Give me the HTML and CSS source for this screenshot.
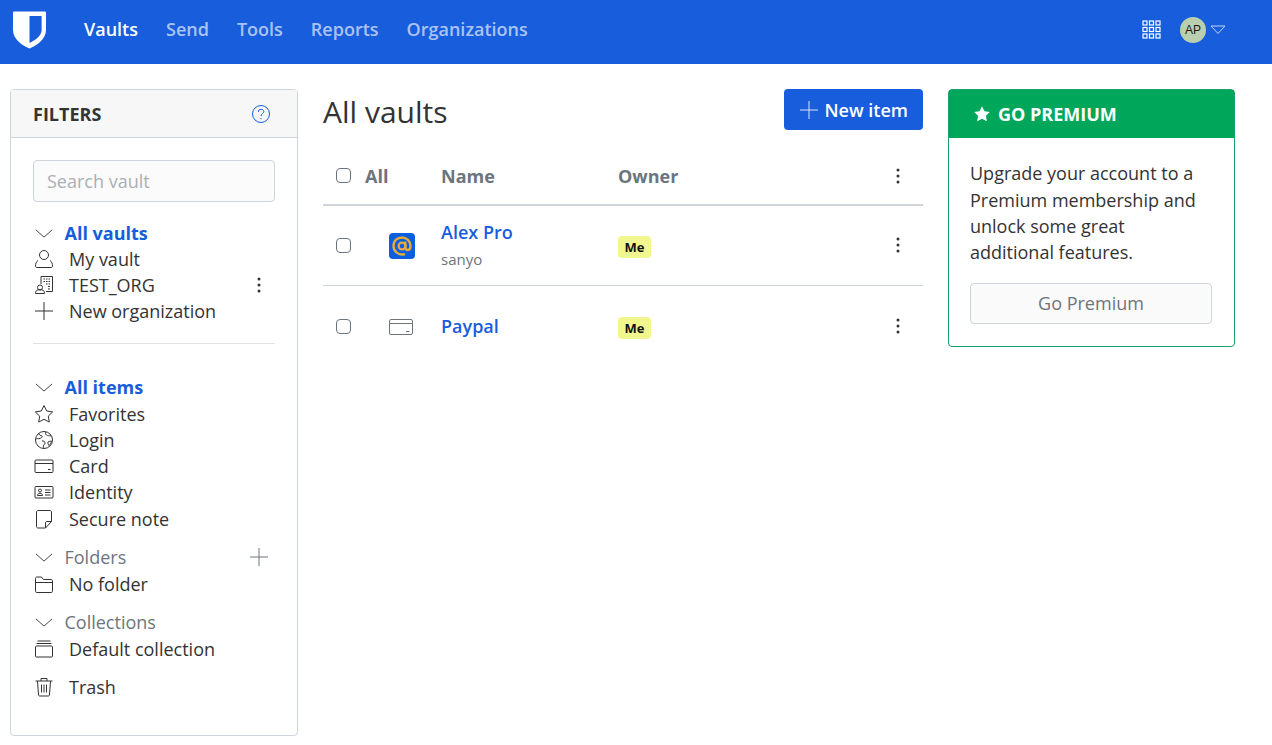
FILE: index.html

```html
<!DOCTYPE html>
<html>
<head>
<meta charset="utf-8">
<title>Vaults</title>
<link rel="stylesheet" href="styles.css">
</head>
<body>
    <nav class="topnav">
        <svg class="logo" viewBox="0 0 34 38"><path fill="#fff" fill-rule="evenodd" d="M1 0h32a1 1 0 0 1 1 1v18c0 10-10 16-17 19C10 35 0 29 0 19V1a1 1 0 0 1 1-1zM17 4.500v28c5-2.700 12.500-7 12.500-13.500V4.500z"/></svg>
        <a class="active" href="#">Vaults</a>
        <a href="#">Send</a>
        <a href="#">Tools</a>
        <a href="#">Reports</a>
        <a href="#">Organizations</a>
        <div class="nav-right">
            <svg class="apps" viewBox="0 0 19 19" fill="none" stroke="#fff" stroke-width="1.200">
                <rect x="1" y="1" width="4" height="4"/><rect x="7.500" y="1" width="4" height="4"/><rect x="14" y="1" width="4" height="4"/>
                <rect x="1" y="7.500" width="4" height="4"/><rect x="7.500" y="7.500" width="4" height="4"/><rect x="14" y="7.500" width="4" height="4"/>
                <rect x="1" y="14" width="4" height="4"/><rect x="7.500" y="14" width="4" height="4"/><rect x="14" y="14" width="4" height="4"/>
            </svg>
            <span class="avatar">AP</span>
            <svg class="caret" viewBox="0 0 16 10" fill="none" stroke="#c5d6f5" stroke-width="1"><path d="M1 1h14L8 8.500z"/></svg>
        </div>
    </nav>

    <div class="page">
        <aside class="filters">
            <div class="filters-head">
                <span>FILTERS</span>
                <svg class="help" viewBox="0 0 20 20" fill="none" stroke="#175ddc" stroke-width="1"><circle cx="10" cy="10" r="8.500"/><path d="M7.300 8c0-1.700 1.200-2.700 2.800-2.700s2.700 1 2.700 2.300c0 2-2.800 2.200-2.800 4.400"/><path d="M10 14v1.200"/></svg>
            </div>
            <div class="filters-body">
                <input class="search" type="text" placeholder="Search vault">

                <div class="row head first">
                    <svg class="chev" viewBox="0 0 20 10"><path d="M1 1l9 8 9-8"/></svg>
                    <a class="head-link" href="#">All vaults</a>
                </div>
                <div class="row">
                    <svg class="ico" viewBox="0 0 20 20"><circle cx="10" cy="6" r="4.500"/><path d="M4 11.500C2 13 1.500 15 1.500 17c0 1 .5 1.500 1.500 1.500h14c1 0 1.500-.5 1.500-1.500 0-2-.5-4-2.500-5.500"/></svg>
                    <span>My vault</span>
                </div>
                <div class="row">
                    <svg class="ico" viewBox="0 0 20 20"><path d="M7 9V1.500h11.500v15H12"/><path d="M9.500 4h1.500M12 4h1.500M14.500 4H16M9.500 6.500h1.500M12 6.500h1.500M14.500 6.500H16M12 9h1.500M14.500 9H16M14 11.500h2M14 14h2"/><circle cx="6" cy="12.500" r="2.500"/><path d="M1.500 18.500c0-2 1-3.500 2.500-3.700h4c1.500.2 2.500 1.700 2.500 3.700z"/></svg>
                    <span>TEST_ORG</span>
                    <svg class="dots" viewBox="0 0 4 16"><circle cx="2" cy="2" r="1.500"/><circle cx="2" cy="8" r="1.500"/><circle cx="2" cy="14" r="1.500"/></svg>
                </div>
                <div class="row">
                    <svg class="ico" viewBox="0 0 20 20"><path d="M10 1v18M1 10h18"/></svg>
                    <span>New organization</span>
                </div>
                <hr class="divider">

                <div class="row head spaced">
                    <svg class="chev" viewBox="0 0 20 10"><path d="M1 1l9 8 9-8"/></svg>
                    <a class="head-link" href="#">All items</a>
                </div>
                <div class="row">
                    <svg class="ico" viewBox="0 0 20 20"><path d="M10 1.500l2.700 5.500 6 .9-4.400 4.200 1 6L10 15.300l-5.300 2.800 1-6L1.300 7.900l6-.9z"/></svg>
                    <span>Favorites</span>
                </div>
                <div class="row">
                    <svg class="ico" viewBox="0 0 20 20"><circle cx="10" cy="10" r="8.500"/><path d="M5 3.500c0 2 2 2 3 2.500s-.5 2-2 2.500-3.500-.5-4.500 1M12 2c-1 1.500 0 3 1.500 3.500s2 0 4 .5M8 11c1.500-.5 3 .5 3 2s-1.500 1.500-1.500 3 0 1.500.5 2.500M14 12c1-1 2.500-.5 3.500-1-.5 2-1 3-2.500 4.500-.5-1-1.500-2-1-3.500z"/></svg>
                    <span>Login</span>
                </div>
                <div class="row">
                    <svg class="ico" viewBox="0 0 20 20"><rect x="1" y="4" width="18" height="12.500" rx="1"/><path d="M1 7.500h18M14 13.500h2.500"/></svg>
                    <span>Card</span>
                </div>
                <div class="row">
                    <svg class="ico" viewBox="0 0 20 20"><rect x="1" y="4.500" width="18" height="11.500" rx="1"/><circle cx="6" cy="8.500" r="1.500"/><path d="M3.500 13.500c0-1.500 1-2.200 2.500-2.200s2.500.7 2.500 2.200zM11 8h5.500M11 10.500h5.500M11 13h5.500"/></svg>
                    <span>Identity</span>
                </div>
                <div class="row note-row">
                    <svg class="ico" viewBox="0 0 20 20"><path d="M2.500 3c0-1 .5-1.500 1.500-1.500h12c1 0 1.500.5 1.500 1.500v9.500l-6 6.500H4c-1 0-1.500-.5-1.500-1.500z"/><path d="M17.500 12.500h-4.500c-1 0-1.500.5-1.500 1.500v5"/></svg>
                    <span>Secure note</span>
                </div>

                <div class="row head muted spaced gap-folders">
                    <svg class="chev" viewBox="0 0 20 10"><path d="M1 1l9 8 9-8"/></svg>
                    <span class="head-text">Folders</span>
                    <svg class="add" viewBox="0 0 20 20"><path d="M10 1v18M1 10h18"/></svg>
                </div>
                <div class="row">
                    <svg class="ico" viewBox="0 0 20 20"><path d="M1.500 17V4.500c0-1 .5-1.500 1.500-1.500h4.500l2 2.500H17c1 0 1.500.5 1.500 1.500v10c0 1-.5 1.500-1.500 1.500H3c-1 0-1.500-.5-1.500-1.500zM1.500 8.500h17"/></svg>
                    <span>No folder</span>
                </div>

                <div class="row head muted spaced gap-collections">
                    <svg class="chev" viewBox="0 0 20 10"><path d="M1 1l9 8 9-8"/></svg>
                    <span class="head-text">Collections</span>
                </div>
                <div class="row">
                    <svg class="ico" viewBox="0 0 20 20"><rect x="1.500" y="7" width="17" height="11" rx="1"/><path d="M2.500 4.500h15M3.500 2h13"/></svg>
                    <span>Default collection</span>
                </div>

                <div class="row gap-trash">
                    <svg class="ico" viewBox="0 0 20 20"><path d="M1.500 4h17M7 4V1.500h6V4M3.500 4l1 14c0 .5.500 1 1 1h9c.5 0 1-.5 1-1l1-14M7.500 7.500v8M10 7.500v8M12.500 7.500v8"/></svg>
                    <span>Trash</span>
                </div>
            </div>
        </aside>

        <main class="vault">
            <div class="vault-head">
                <h1>All vaults</h1>
                <button class="btn-new">
                    <svg viewBox="0 0 20 20"><path d="M10 1v18M1 10h18"/></svg>
                    New item
                </button>
            </div>
            <div class="vrow vrow-head">
                <span class="c-check"><input type="checkbox"></span>
                <span class="c-all">All</span>
                <span class="c-name">Name</span>
                <span class="c-owner">Owner</span>
                <span class="c-menu"><svg class="dots" viewBox="0 0 4 16"><circle cx="2" cy="2" r="1.500"/><circle cx="2" cy="8" r="1.500"/><circle cx="2" cy="14" r="1.500"/></svg></span>
            </div>
            <div class="vrow vrow-first">
                <span class="c-check"><input type="checkbox"></span>
                <span class="c-all c-icon">
                    <svg class="site" viewBox="0 0 26 26"><rect width="26" height="26" rx="4" fill="#0a5fe0"/><path fill="none" stroke="#e5a93d" stroke-width="2.400" stroke-linecap="round" d="M15 21.300C9.500 22.300 4.500 18.500 4.500 13S8.500 4.500 13 4.500 21.500 8 21.500 13c0 2.300-1 4-2.700 4S16.300 15.500 16.300 14V9.500"/><circle cx="13" cy="13" r="3.400" fill="none" stroke="#e5a93d" stroke-width="2.200"/></svg>
                </span>
                <span class="c-name">
                    <a href="#">Alex Pro</a>
                    <small>sanyo</small>
                </span>
                <span class="c-owner"><span class="badge">Me</span></span>
                <span class="c-menu"><svg class="dots" viewBox="0 0 4 16"><circle cx="2" cy="2" r="1.500"/><circle cx="2" cy="8" r="1.500"/><circle cx="2" cy="14" r="1.500"/></svg></span>
            </div>
            <div class="vrow vrow-second">
                <span class="c-check"><input type="checkbox"></span>
                <span class="c-all c-icon">
                    <svg class="card-ico" viewBox="0 0 24 16" fill="none" stroke="#6c757d" stroke-width="1"><rect x=".5" y=".5" width="23" height="15" rx="1.500"/><path d="M.5 4.500h23M17 12.500h3.500"/></svg>
                </span>
                <span class="c-name"><a href="#">Paypal</a></span>
                <span class="c-owner"><span class="badge">Me</span></span>
                <span class="c-menu"><svg class="dots" viewBox="0 0 4 16"><circle cx="2" cy="2" r="1.500"/><circle cx="2" cy="8" r="1.500"/><circle cx="2" cy="14" r="1.500"/></svg></span>
            </div>
        </main>

        <aside class="premium">
            <div class="premium-head">
                <svg viewBox="0 0 20 20"><path fill="#fff" d="M10 1.500l2.700 5.400 6 .9-4.300 4.200 1 6L10 15.200 4.600 18l1-6-4.300-4.200 6-.9z"/></svg>
                GO PREMIUM
            </div>
            <div class="premium-body">
                <p>Upgrade your account to a Premium membership and unlock some great additional features.</p>
                <button class="btn-premium">Go Premium</button>
            </div>
        </aside>
    </div>
</body>
</html>
```

FILE: styles.css

```css
* {
    box-sizing: border-box;
}
body {
    margin: 0;
    background: #fff;
    color: #333;
    font-family: "Open Sans", "Liberation Sans", sans-serif;
    font-size: 18px;
    line-height: 26px;
}
a {
    text-decoration: none;
}

.topnav {
    display: flex;
    align-items: center;
    height: 64px;
    padding-left: 13px;
    background: #175ddc;
}
.topnav a {
    margin-right: 28px;
    margin-bottom: 6px;
    color: rgba(255, 255, 255, 0.65);
    font-weight: 600;
}
.topnav a.active {
    color: #fff;
}
.logo {
    width: 33px;
    height: 38px;
    margin: -4px 38px 0 0;
}
.nav-right {
    display: flex;
    align-items: center;
    margin-left: auto;
    margin-bottom: 5px;
    padding-right: 46px;
}
.apps {
    width: 19px;
    height: 19px;
    margin-right: 19px;
}
.avatar {
    width: 26px;
    height: 26px;
    margin-right: 4px;
    border-radius: 50%;
    background: #b9cfae;
    color: #1a1a1a;
    font-family: "Liberation Sans", sans-serif;
    font-size: 12px;
    line-height: 26px;
    text-align: center;
}
.caret {
    width: 16px;
    height: 10px;
}

.page {
    display: grid;
    grid-template-columns: 288px 600px 287px;
    gap: 25px;
    align-items: start;
    padding: 25px 0 0 10px;
}

.filters {
    height: 647px;
    border: 1px solid #ced4da;
    border-radius: 4px;
}
.filters-head {
    display: flex;
    align-items: center;
    justify-content: space-between;
    height: 48px;
    padding: 1px 26px 0 22px;
    border-bottom: 1px solid #ced4da;
    background: #f7f7f7;
    font-weight: 700;
    font-size: 18px;
}
.help {
    width: 20px;
    height: 20px;
    margin-top: -1px;
}
.filters-body {
    padding: 22px 22px 0;
}
.search {
    display: block;
    width: 100%;
    height: 42px;
    padding: 0 13px;
    border: 1px solid #ced4da;
    border-radius: 4px;
    background: #fbfbfb;
    font: inherit;
}
.search::placeholder {
    color: #a9afb5;
}

.row {
    display: flex;
    align-items: center;
    height: 26px;
}
.row.first {
    margin-top: 18px;
}
.row.spaced {
    margin-bottom: 1px;
}
.note-row {
    margin-top: 1px;
}
.ico {
    flex: none;
    width: 20px;
    height: 20px;
    margin: 0 15px 0 1px;
    fill: none;
    stroke: #333;
    stroke-width: 1;
}
.chev {
    flex: none;
    width: 18px;
    height: 9px;
    margin: 0 11.500px 0 2px;
    fill: none;
    stroke: #333;
    stroke-width: 1;
}
.head-link {
    color: #175ddc;
    font-weight: 700;
}
.muted {
    color: #6c757d;
}
.row .dots {
    margin-left: auto;
    margin-right: 14px;
}
.dots {
    width: 4px;
    height: 16px;
    fill: #333;
}
.add {
    width: 20px;
    height: 20px;
    margin-left: auto;
    margin-right: 6px;
    fill: none;
    stroke: #6c757d;
    stroke-width: 1;
}
.divider {
    margin: 19px 0 30px;
    border: 0;
    border-top: 1px solid #dfe3e6;
}
.gap-folders {
    margin-top: 12px;
}
.gap-collections {
    margin-top: 12px;
}
.gap-trash {
    margin-top: 12px;
}

.vault-head {
    display: flex;
    align-items: flex-start;
    justify-content: space-between;
    height: 62px;
}
h1 {
    margin: 1px 0 0;
    color: #333;
    font-size: 30px;
    font-weight: 400;
    line-height: 44px;
}
.btn-new {
    display: flex;
    align-items: center;
    gap: 5px;
    height: 41px;
    padding: 0 15px;
    border: 0;
    border-radius: 4px;
    background: #175ddc;
    color: #fff;
    font: 600 18px "Open Sans", sans-serif;
}
.btn-new svg {
    width: 20px;
    height: 20px;
    fill: none;
    stroke: #dbe6fa;
    stroke-width: 1;
}

.vrow {
    display: flex;
    align-items: center;
}
.vrow-head {
    height: 55px;
    padding-bottom: 4px;
    border-bottom: 2px solid #ced4da;
    color: #6c757d;
    font-weight: 700;
}
.vrow-first {
    height: 80px;
    border-bottom: 1px solid #ced4da;
}
.vrow-first .c-owner,
.vrow-first .c-menu {
    margin-top: -2px;
}
.vrow-second {
    height: 80px;
}
.c-check {
    display: flex;
    width: 42px;
    padding-left: 13px;
}
.c-check input {
    appearance: none;
    width: 15px;
    height: 15px;
    margin: 0;
    border: 1px solid #6c757d;
    border-radius: 4px;
    background: #fff;
}
.c-all {
    width: 76px;
}
.c-icon {
    padding-left: 24px;
}
.vrow-second .card-ico {
    margin-top: 2px;
}
.c-name {
    width: 177px;
}
.c-name a {
    display: block;
    color: #175ddc;
    font-weight: 600;
}
.c-name small {
    display: block;
    margin: 2px 0 1px;
    color: #6c757d;
    font-size: 15px;
    line-height: 24px;
}
.c-owner {
    flex: 1;
}
.c-menu {
    display: flex;
    width: 28px;
    padding-left: 1px;
}
.site {
    display: block;
    width: 26px;
    height: 26px;
}
.card-ico {
    display: block;
    width: 24px;
    height: 16px;
}
.badge {
    display: inline-block;
    width: 33px;
    height: 22px;
    border-radius: 4px;
    background: #f2f68f;
    color: #111;
    font-size: 13px;
    font-weight: 700;
    line-height: 22px;
    text-align: center;
}

.premium {
    border: 1px solid #1e9e68;
    border-radius: 4px;
}
.premium-head {
    display: flex;
    align-items: center;
    gap: 7px;
    height: 48px;
    padding-left: 24px;
    background: #00a65a;
    color: #fff;
    font-weight: 700;
}
.premium-head svg {
    width: 18px;
    height: 18px;
}
.premium-body {
    padding: 22.200px 22px 22px 21px;
}
.premium-body p {
    margin: 0 0 16.800px;
    line-height: 26.400px;
}
.btn-premium {
    display: block;
    width: 100%;
    height: 41px;
    border: 1px solid #ced4da;
    border-radius: 4px;
    background: #fafafa;
    color: #6c757d;
    font: 400 18px "Open Sans", sans-serif;
}
```
